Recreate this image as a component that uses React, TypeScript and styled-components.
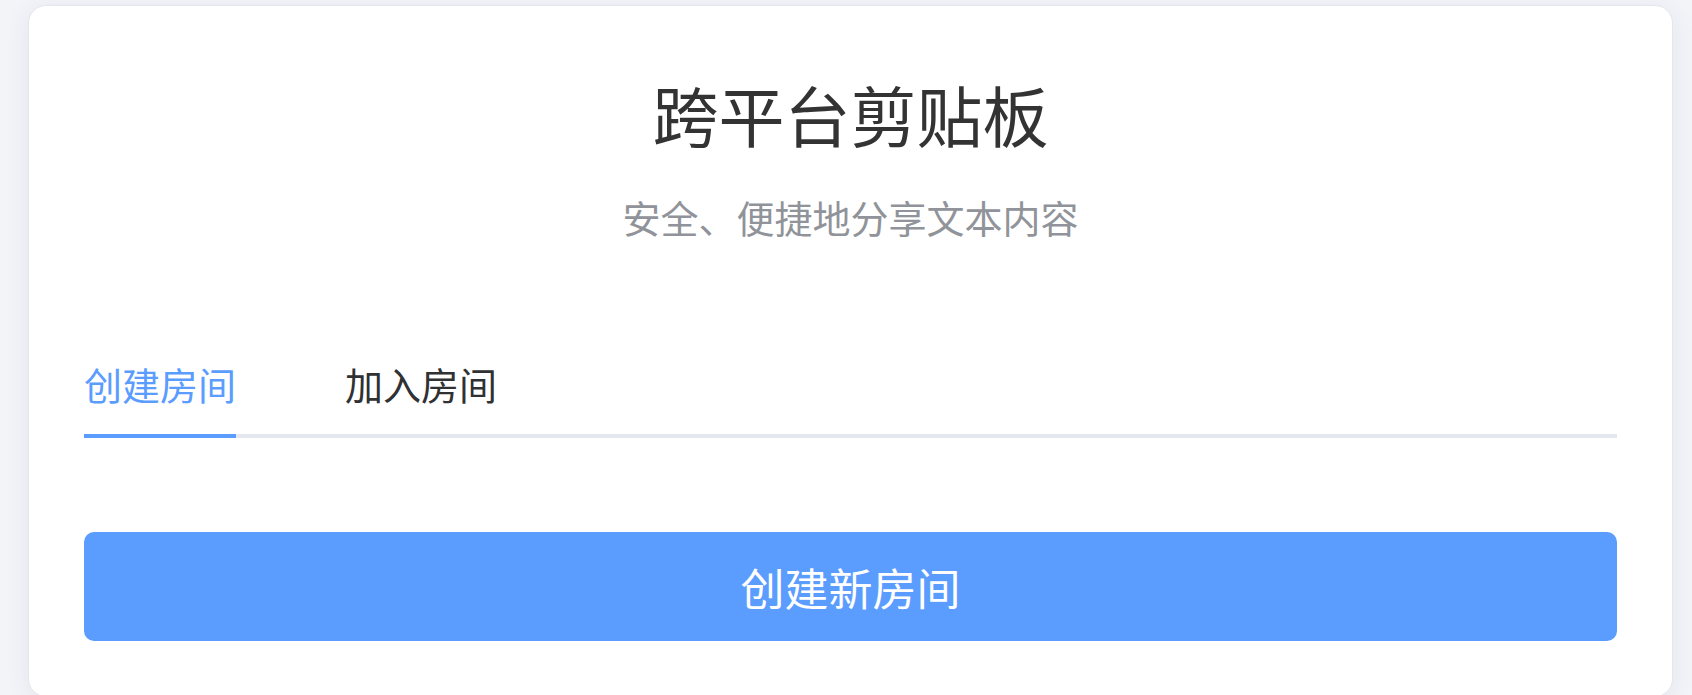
import React, { useState } from 'react';
import styled, { createGlobalStyle } from 'styled-components';

const GlobalStyle = createGlobalStyle`
  html, body {
    margin: 0;
    padding: 0;
    background-color: #f3f4f8;
    font-family: "Noto Sans CJK SC", "Noto Sans", sans-serif;
  }
  * {
    box-sizing: border-box;
  }
`;

const tabs = ['创建房间', '加入房间'];

const App: React.FC = () => {
  const [active, setActive] = useState(0);

  return (
    <>
      <GlobalStyle />
      <Page>
        <Card>
          <Header>
            <Title>跨平台剪贴板</Title>
            <Subtitle>安全、便捷地分享文本内容</Subtitle>
          </Header>
          <TabBar>
            {tabs.map((label, i) => (
              <Tab key={label} $active={i === active} onClick={() => setActive(i)}>
                {label}
              </Tab>
            ))}
          </TabBar>
          <PrimaryBtn>创建新房间</PrimaryBtn>
        </Card>
      </Page>
    </>
  );
};

export default App;

const Page = styled.div`
  padding: 5px 19px 0 28px;
`;

const Card = styled.div`
  background-color: #ffffff;
  border: 1px solid #e4e6ee;
  border-radius: 18px;
  box-shadow: 0 4px 24px rgba(60, 70, 110, 0.08);
  padding: 67px 55px 55px;
`;

const Header = styled.div`
  display: flex;
  flex-direction: column;
  align-items: center;
`;

const Title = styled.h1`
  margin: 0;
  font-size: 66px;
  line-height: 80px;
  font-weight: 400;
  color: #333333;
`;

const Subtitle = styled.p`
  margin: 39px 0 0;
  font-size: 38px;
  line-height: 50px;
  color: #909399;
`;

const TabBar = styled.div`
  display: flex;
  gap: 109px;
  margin-top: 117px;
  border-bottom: 4px solid #e4e7ed;
`;

const Tab = styled.div<{ $active: boolean }>`
  font-size: 38px;
  line-height: 50px;
  padding-bottom: 25px;
  margin-bottom: -4px;
  cursor: pointer;
  color: ${(p) => (p.$active ? '#5b9cff' : '#303133')};
  border-bottom: 4px solid ${(p) => (p.$active ? '#5b9cff' : 'transparent')};
`;

const PrimaryBtn = styled.button`
  display: block;
  width: 100%;
  height: 109px;
  margin-top: 94px;
  border: none;
  border-radius: 10px;
  background-color: #5b9cff;
  color: #ffffff;
  font-family: inherit;
  font-size: 44px;
  cursor: pointer;
`;
